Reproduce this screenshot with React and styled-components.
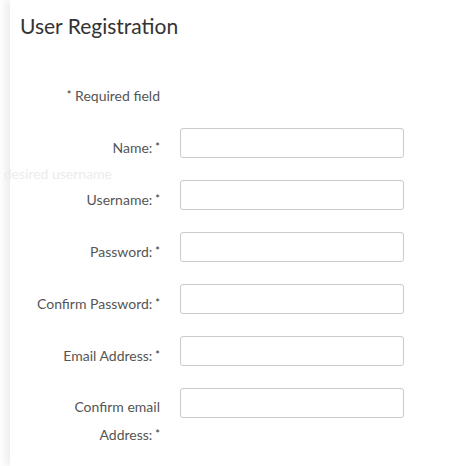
import React from 'react';
import styled, { createGlobalStyle } from 'styled-components';

const GlobalStyle = createGlobalStyle`
  html, body {
    margin: 0;
    padding: 0;
    background: #ffffff;
    overflow: hidden;
  }
  body {
    font-family: Lato, "Open Sans", "Liberation Sans", sans-serif;
  }
`;

// White sheet with a soft shadow along its left edge
const Panel = styled.div`
  position: relative;
  margin-left: 10px;
  height: 466px;
  background: #ffffff;
  box-shadow: -5px 0 8px rgba(0, 0, 0, 0.07);
  padding: 11px 0 0 10px;
  box-sizing: border-box;
`;

const Title = styled.h1`
  margin: 0;
  font-size: 21px;
  font-weight: 400;
  line-height: 30px;
  color: #333333;
`;

const Form = styled.form`
  margin-top: 44px;
  display: flex;
  flex-direction: column;
  gap: 22px;
`;

const Row = styled.div`
  display: grid;
  grid-template-columns: 140px 224px;
  grid-template-rows: ${(p) => (p.$note ? 'auto' : '30px')};
  column-gap: 20px;
  align-items: start;
`;

const Note = styled.div`
  text-align: right;
  font-size: 14px;
  line-height: 20px;
  color: #555555;
`;

const Label = styled.label`
  text-align: right;
  font-size: 14px;
  line-height: 27px;
  padding-top: 5px;
  color: #555555;
`;

const Star = styled.span`
  font-size: 11px;
  color: #333333;
  margin-left: 3px;
  vertical-align: 2px;
`;

const Input = styled.input`
  box-sizing: border-box;
  width: 224px;
  height: 30px;
  border: 1px solid #cccccc;
  border-radius: 3px;
  box-shadow: 0 0 2px rgba(0, 0, 0, 0.04);
  background: #ffffff;
  font: inherit;
  padding: 0 8px;
  outline: none;
`;

// Faded hint that drifts off the left edge of the page
const Hint = styled.span`
  position: absolute;
  top: 165px;
  right: calc(100% - 102px);
  white-space: nowrap;
  font-size: 14px;
  line-height: 18px;
  color: #ececec;
`;

const fields = [
  { id: 'name', label: 'Name:', type: 'text' },
  { id: 'username', label: 'Username:', type: 'text' },
  { id: 'password', label: 'Password:', type: 'password' },
  { id: 'confirm-password', label: 'Confirm Password:', type: 'password' },
  { id: 'email', label: 'Email Address:', type: 'email' },
  { id: 'confirm-email', label: 'Confirm email Address:', type: 'email' },
];

export default function App() {
  return (
    <>
      <GlobalStyle />
      <Panel>
        <Title>User Registration</Title>
        <Form onSubmit={(e) => e.preventDefault()}>
          <Row $note>
            <Note><Star>*</Star> Required field</Note>
          </Row>
          {fields.map((f) => (
            <Row key={f.id}>
              <Label htmlFor={f.id}>
                {f.label}<Star>*</Star>
              </Label>
              <Input id={f.id} type={f.type} />
            </Row>
          ))}
        </Form>
        <Hint>Enter your desired username</Hint>
      </Panel>
    </>
  );
}
